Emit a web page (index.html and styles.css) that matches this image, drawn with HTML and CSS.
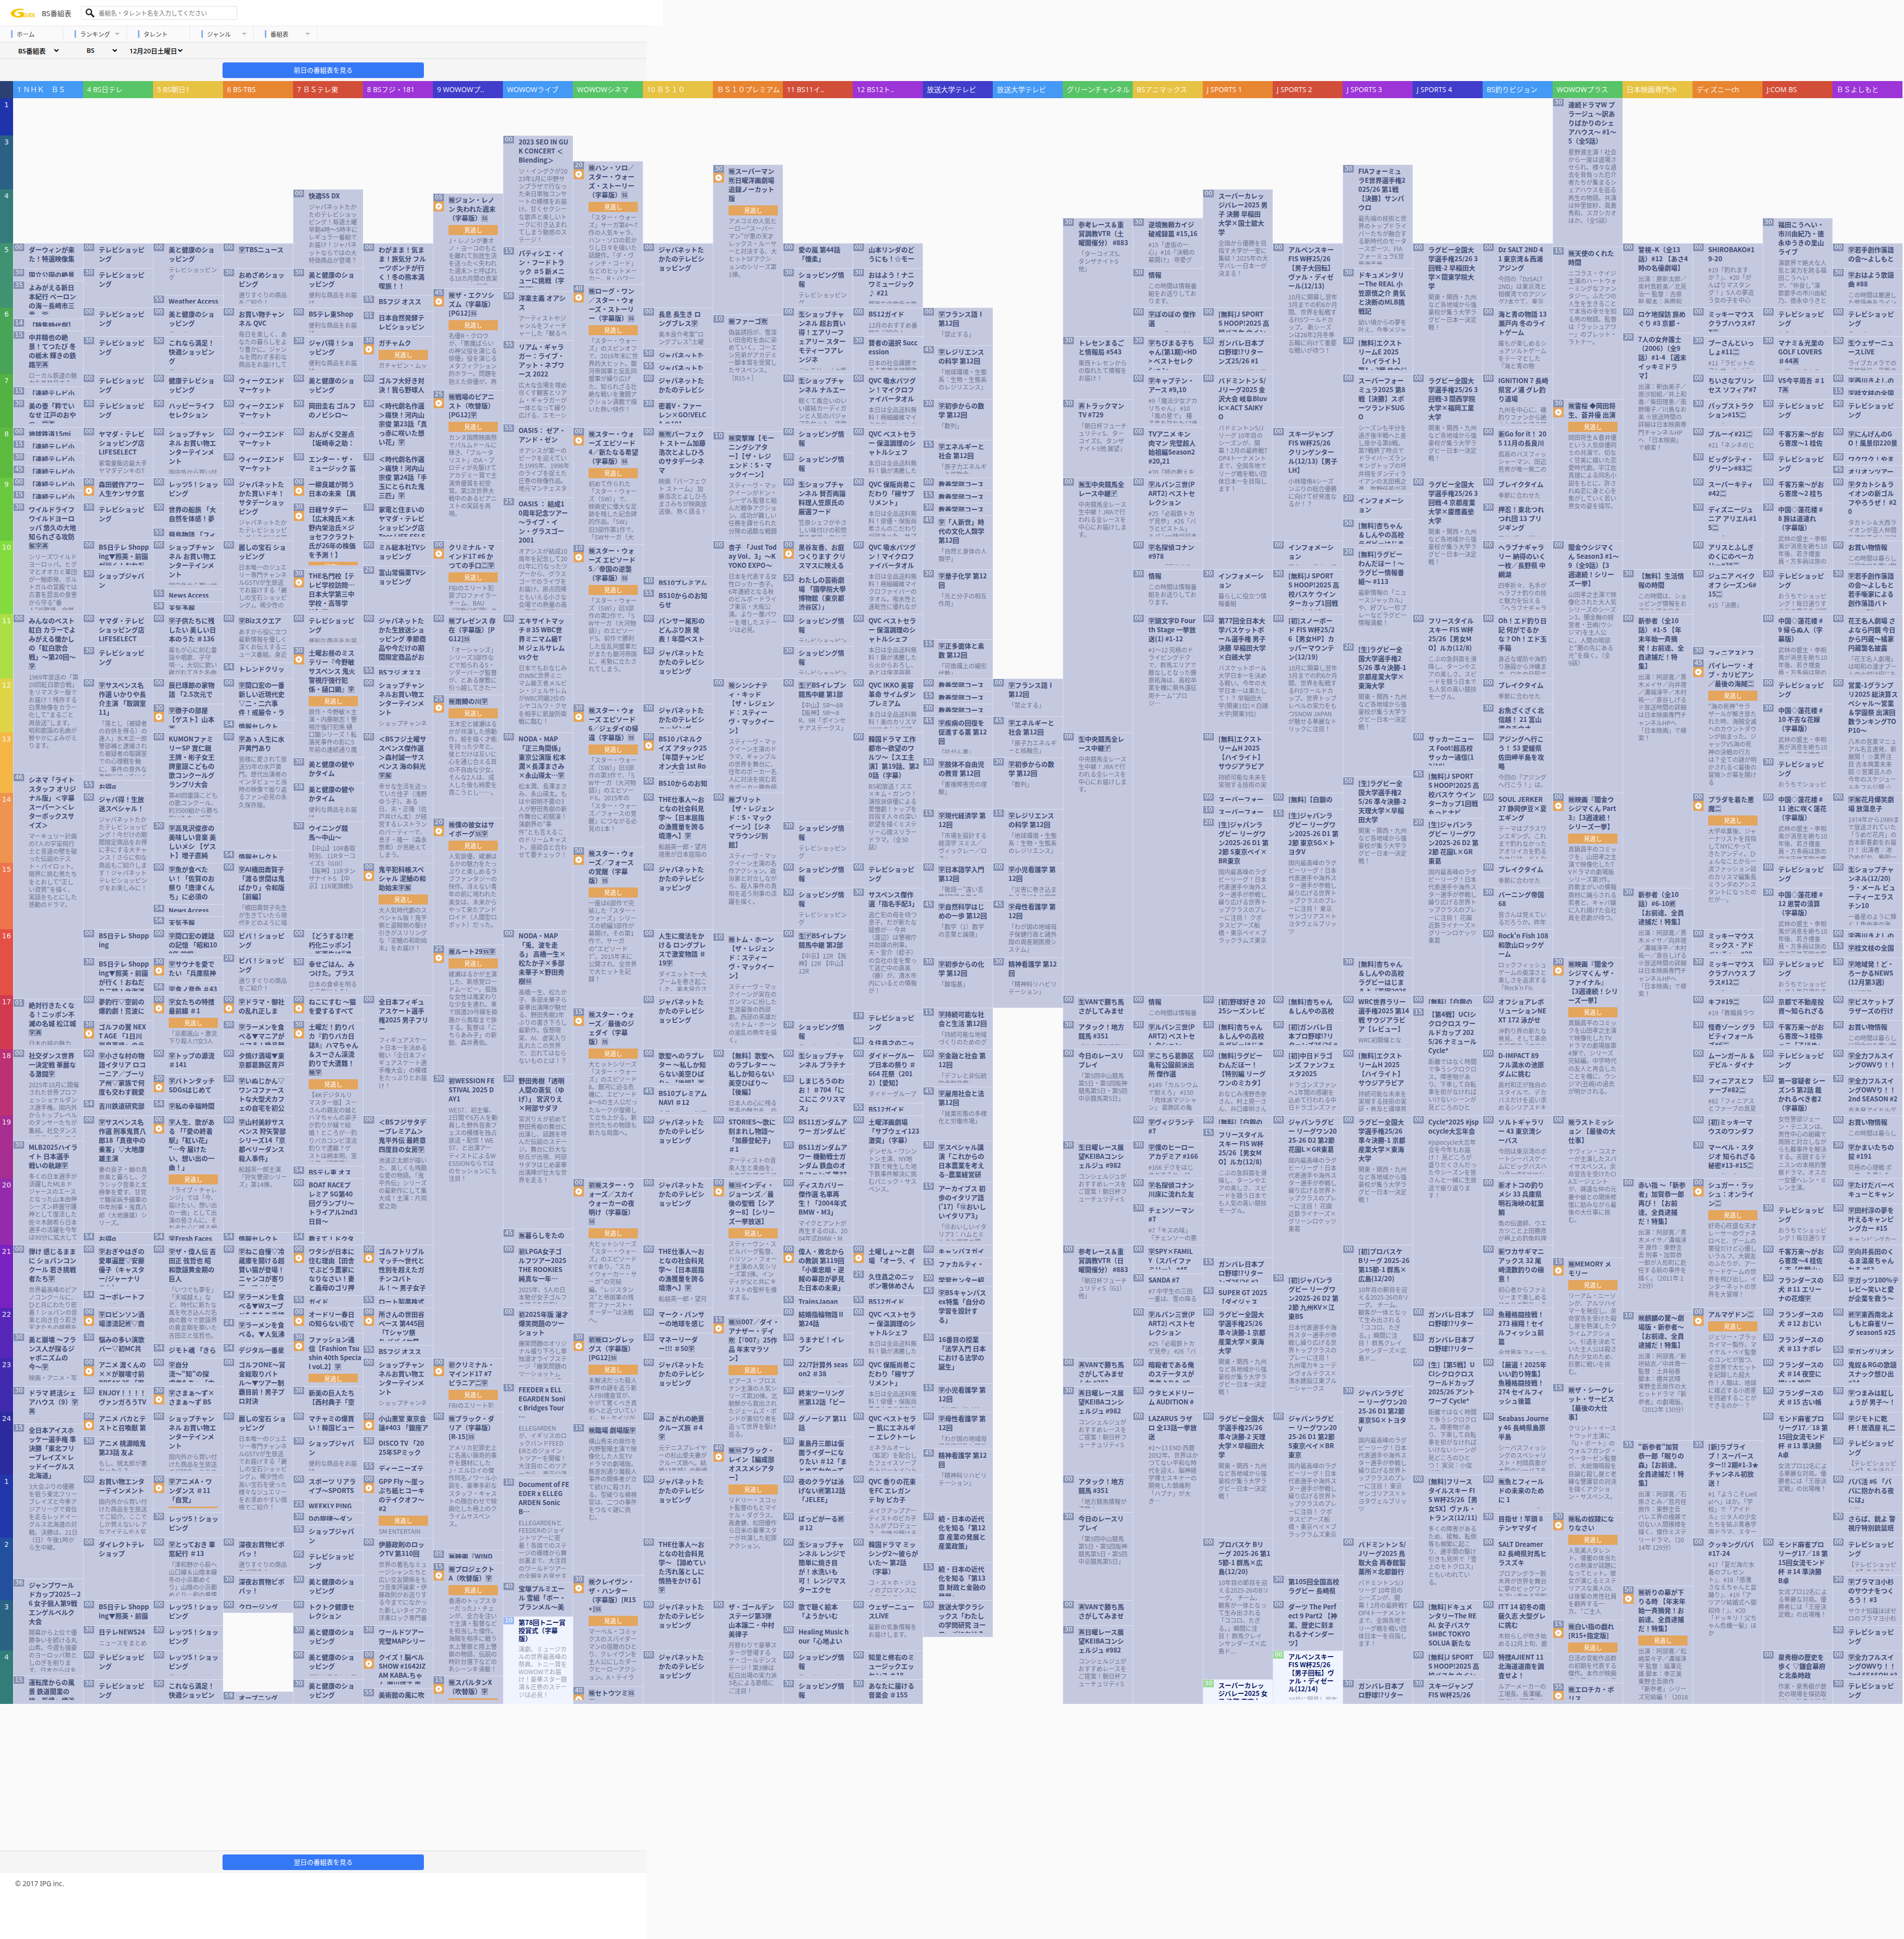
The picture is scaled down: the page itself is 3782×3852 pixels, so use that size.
FILE: index.html
```html
<!DOCTYPE html>
<html lang="ja">
<head>
<meta charset="utf-8">
<title>BS番組表</title>
<link rel="stylesheet" href="styles.css">
</head>
<body>
<header class="top">
  <svg class="logo" viewBox="0 0 52 22" width="52" height="22">
    <path d="M27 3C18 1 6 3 2 9c-3 6 5 11 14 11 5 0 9-1 11-2V9H15v3h5v4c-5 2-12 0-11-5 1-5 9-7 18-6z" fill="#f7c500"/>
    <text x="27" y="19" class="logo-text" textLength="23" lengthAdjust="spacingAndGlyphs">GUIDE</text>
  </svg>
  <span class="site">BS番組表</span>
  <label class="search">
    <svg viewBox="0 0 20 20" width="19" height="19"><circle cx="8" cy="8" r="5.6" fill="none" stroke="#222" stroke-width="2.6"/><path d="M12.3 12.3l5.4 5.4" stroke="#222" stroke-width="3.4" stroke-linecap="round"/></svg>
    <span>番組名・タレント名を入力してください</span>
  </label>
</header>
<nav class="nav">
  <a>ホーム</a><a class="more">ランキング</a><a>タレント</a><a class="more">ジャンル</a><a class="more">番組表</a>
</nav>
<div class="selects">
  <span class="select s1">BS番組表<svg viewBox="0 0 10 7" width="10" height="7"><path d="M1 1l4 4 4-4" fill="none" stroke="#000" stroke-width="2"/></svg></span>
  <span class="select s2">BS<svg viewBox="0 0 10 7" width="10" height="7"><path d="M1 1l4 4 4-4" fill="none" stroke="#000" stroke-width="2"/></svg></span>
  <span class="select s3">12月20日土曜日<svg viewBox="0 0 10 7" width="10" height="7"><path d="M1 1l4 4 4-4" fill="none" stroke="#000" stroke-width="2"/></svg></span>
</div>
<div class="pager"><a class="button">前日の番組表を見る</a></div>
<main class="guide" id="guide"></main>
<div class="pager bottom"><a class="button">翌日の番組表を見る</a></div>
<footer class="foot">© 2017 IPG inc.</footer>
<script src="guide.js"></script>
</body>
</html>
```
FILE: styles.css
```css
* { box-sizing: border-box; }
body {
  margin: 0;
  min-height: 3852px;
  background: #fafafa;
  font-family: "Noto Sans", "Noto Sans CJK JP", sans-serif;
  color: #444;
}
.top {
  display: flex;
  align-items: center;
  width: 1317px;
  height: 51px;
  padding-left: 20px;
  background: #fff;
}
.logo, .search svg, .select svg { flex: none; }
.logo-text { font: bold 11px "Liberation Sans", sans-serif; fill: #f7c500; }
.site { margin-left: 11px; width: 67px; font-size: 14px; white-space: nowrap; }
.search {
  display: flex;
  align-items: center;
  gap: 8px;
  width: 310px;
  height: 27px;
  margin-left: 11px;
  margin-top: -10px;
  padding-left: 7px;
  border: 1px solid #ddd;
  border-radius: 3px;
  font-size: 12px;
  color: #777;
  position: relative;
  top: 5px;
}
.nav {
  display: flex;
  width: 1284px;
  height: 33px;
  background: #fafafa;
  border-top: 1px solid #e6e6e6;
  border-bottom: 1px solid #ddd;
}
.nav a {
  display: flex;
  align-items: center;
  width: 126px;
  padding-left: 22px;
  border-right: 1px solid #e8e8e8;
  font-size: 12px;
}
.nav a::before { content: ""; width: 3px; height: 15px; margin-right: 8px; background: #7fb0f0; }
.nav .more::after {
  content: "";
  margin-left: auto;
  margin-right: 13px;
  border: 5px solid transparent;
  border-top-color: #bbb;
  border-bottom: 0;
}
.selects {
  display: flex;
  align-items: center;
  width: 1284px;
  height: 33px;
  padding-left: 36px;
  background: #f5f5f5;
  border-bottom: 1px solid #ddd;
  color: #000;
  font-size: 13px;
  font-weight: 500;
  white-space: nowrap;
}
.select { display: flex; align-items: center; justify-content: space-between; }
.s1 { width: 81px; }
.s2 { width: 61px; margin-left: 55px; }
.s3 { width: 106px; margin-left: 24px; }
.pager {
  display: flex;
  align-items: center;
  justify-content: center;
  width: 1284px;
  height: 44px;
  background: #f5f5f5;
}
.button {
  width: 400px;
  height: 31px;
  line-height: 31px;
  border-radius: 4px;
  background: #3478f6;
  color: #fff;
  font-size: 13px;
  text-align: center;
}
.guide { display: flex; width: 3779px; height: 3224px; }
.guide > div { width: 139px; }
.guide > .hours { width: 26px; }
.name {
  height: 34px;
  padding-left: 8px;
  line-height: 34px;
  font-size: 14px;
  color: rgba(255, 255, 255, .92);
  white-space: pre;
  overflow: hidden;
}
.hours .name { background: #2b4173; }
.hour {
  padding-top: 4px;
  text-align: center;
  font: 14px/19px "DejaVu Sans", sans-serif;
  color: rgba(255, 255, 255, .9);
}
.c0 { background: #4499f5; }
.c1 { background: #58c468; }
.c2 { background: #e7c243; }
.c3 { background: #e88531; }
.c4 { background: #d24e38; }
.c5 { background: #9c34d7; }
.c6 { background: #403dcb; }
.item {
  display: flex;
  align-items: flex-start;
  overflow: hidden;
  padding-bottom: 8px;
  border-top: 1px solid #dfe2f0;
  border-left: 1px solid #dfe2f0;
  background: #c5c9e0;
}
.side { width: 21px; height: 100%; overflow: hidden; flex: none; }
.min {
  height: 15px;
  background: #8591b3;
  color: #eef0f8;
  font: 12px/15px "DejaVu Sans", sans-serif;
  text-align: center;
}
.play { display: block; width: 21px; height: 20px; background: #e4a55d; }
.text {
  height: 100%;
  margin-left: 9px;
  padding-top: 3px;
  overflow: hidden;
  flex: 1;
  font-family: "Noto Sans CJK JP", sans-serif;
  white-space: pre;
}
.title { margin-bottom: 5px; font-size: 13px; line-height: 18px; font-weight: 700; color: #3f4d75; }
.catchup {
  width: 98px;
  height: 20px;
  margin-bottom: 3px;
  background: #e4a55d;
  color: #fff;
  font-size: 12px;
  line-height: 20px;
  text-align: center;
}
.desc { font-size: 12px; line-height: 15.1px; color: #6f7591; }
.later { background: #f0f4ff; }
.later .min { background: #9db9f5; color: #fff; }
.later.live .min { background: #97d997; }
.later .title { color: #0c1b66; line-height: 16px; }
.later .desc { color: #999eae; }
.bottom { margin-top: 291px; height: 45px; border-top: 1px solid #ddd; }
.foot { width: 1284px; height: 131px; padding: 12px 0 0 30px; background: #fff; font-size: 13.5px; color: #555; }
```
FILE: guide.js
```js
// Vertical position of every start time, in pixels from the top of the page.
const ticks = {
  "0130":195,"0300":269,"0320":320,"0330":327,"0400":376,"0405":384,"0430":433,
  "0500":483,"0515":490,"0530":533,"0535":558,"0540":565,"0545":573,"0550":579,"0555":586,
  "0600":611,"0601":618,"0610":625,"0614":633,"0615":657,"0620":661,"0630":668,"0635":676,"0645":686,"0650":693,"0655":718,
  "0700":743,"0715":768,"0725":775,"0730":793,"0755":842,
  "0800":849,"0810":857,"0815":874,"0830":899,"0845":924,
  "0900":949,"0915":974,"0920":981,"0925":988,"0930":999,"0945":1024,"0950":1031,"0955":1049,
  "1000":1074,"1010":1081,"1020":1088,"1029":1124,"1030":1131,"1035":1139,"1040":1145,"1055":1170,"1058":1195,
  "1100":1220,"1115":1270,"1120":1277,"1130":1284,"1145":1309,"1154":1316,"1155":1323,
  "1200":1348,"1215":1373,"1225":1380,"1230":1398,"1245":1423,"1254":1430,
  "1300":1455,"1330":1505,"1345":1529,"1346":1536,"1350":1543,"1355":1550,"1359":1555,
  "1400":1575,"1410":1600,"1415":1607,"1420":1625,"1430":1632,"1450":1682,"1454":1689,
  "1500":1714,"1530":1764,"1545":1788,"1554":1796,"1556":1820,
  "1600":1846,"1610":1853,"1615":1870,"1625":1877,"1629":1895,"1630":1902,"1656":1952,
  "1700":1977,"1701":1984,"1715":2002,"1719":2009,"1730":2027,"1748":2059,
  "1800":2084,"1830":2134,"1845":2159,"1854":2184,"1855":2191,
  "1900":2216,"1915":2241,"1930":2266,"1954":2316,
  "2000":2341,"2015":2348,"2030":2391,"2045":2441,"2054":2448,
  "2100":2473,"2115":2498,"2125":2523,"2130":2530,"2145":2555,"2154":2563,"2155":2573,
  "2200":2598,"2210":2605,"2215":2613,"2224":2619,"2230":2648,"2254":2669,"2255":2672,
  "2300":2698,"2315":2748,"2330":2754,
  "2400":2805,"2415":2828,"2430":2854,"2435":2861,"2440":2868,"2445":2878,"2455":2904,
  "2500":2930,"2510":2936,"2525":2979,"2530":3004,"2535":3029,
  "2600":3055,"2605":3079,"2615":3104,"2630":3129,"2636":3136,"2640":3143,"2650":3150,
  "2700":3179,"2701":3204,"2710":3211,"2715":3218,"2730":3229,"2745":3252,
  "2800":3279,"2815":3329,"2830":3336,"2835":3343,"2840":3350,"2855":3354,"2859":3360,"2900":3385
};

const hours = [
  ["0130","1","#1f34ab"],["0300","3","#2b6184"],["0400","4","#337c7a"],["0500","5","#409372"],["0600","6","#48a456"],
  ["0700","7","#53b241"],["0800","8","#5cba3e"],["0900","9","#6ac83c"],["1000","10","#82dc3e"],["1100","11","#acdf45"],
  ["1200","12","#ded446"],["1300","13","#f4b746"],["1400","14","#ef9350"],["1500","15","#ee744c"],["1600","16","#e55044"],
  ["1700","17","#d23a52"],["1800","18","#bd3073"],["1900","19","#a82d90"],["2000","20","#932bac"],["2100","21","#7a22c0"],
  ["2200","22","#5526b8"],["2300","23","#3f2aae"],["2400","24","#2b2a9e"],["2500","1","#2237ab"],["2600","2","#234f9f"],
  ["2700","3","#2a6284"],["2800","4","#327c79"]
];

// Texts that many programmes share, written as "@" and a letter in the lists below.
const shared = {
  t: "テレビショッピ|ング",
  s: "ショッピング情|報",
  j: "ジャパネットた|かたのテレビシ|ョッピング",
  b: "美と健康のショ|ッピング",
  l: "レッツ5！ショッ|ピング",
  w: "ウィークエンド|マーケット",
  c: "ショップチャン|ネル お買い物エ|ンターテインメ|ント",
  k: "教養学部コース",
  r: "【連続テレビ小",
  d: "テレビショッピン",
  n: "便利な商品をお届",
  q: "QVC ベストセラ|ー 保温調理のシ|ャトルシェフ",
  a: "本日は全品送料無|料！",
  v: "関東・関西・九州|など各地域から強|豪校が集う大学ラ|グビー日本一決定|戦！",
  g: "国内最高峰のラグ|ビーリーグ！日本|代表選手や海外ス|ター選手が参戦し|繰り広げる世界ト|ップクラスのプレ|ーに注目！ ",
  h: "武林の盟主・李相|夷が消息を絶ち10|年後、若き捜査",
  x: "THE仕事人～お|となの社会科見|学～【日本屈指|の漁獲量を誇る|境港へ】🈑~船越英一郎・望月|理恵が日本屈指の",
  f: "出演：阿部寛／黒|木メイサ／向井理|／溝端淳平／木村|祐一／泉谷しげる|※放送時間の詳細|は日本映画専門チ|ャンネルHPへ|「日本映画」で検|索！",
  z: "スティーヴ・マッ|クイーン",
  e: "[無料]J SPORT|S HOOP!2025 高|校バスケ ウイン",
  i: "[無料]杏ちゃん|＆しんやの高校",
  p: "ガンバレ日本プ|ロ野球!?リター",
  u: "日曜レース展|望KEIBAコンシ|ェルジュ #982~コンシェルジュが|おすすめレースを|ご提案！朝日杯フ|ューチュリティS",
  m: "今日のレースリ|プレイ~「第5回中山競馬|第5日・第5回阪神|競馬第5日・第5回|中京競馬第5日」",
  y: "おうちでショッピ",
  o: "10年目の節目を迎|える2025-26のBリ|ーグ。 チーム、|観客が一体となっ|て生み出される|「ココロ、たぎ|る。」瞬間に注|目！ 群馬クレイ|ンサンダーズ×広|島ド..."
};

// One programme per line: time + flags ~ title ~ description, "|" breaks a line.
// Flags: p = catch-up available, n = still to come, g = live, - = off air.
const channels = [
["1 ＮＨＫ　ＢＳ",`
0500~ダーウィンが来|た！特選映像集
0530~国立公園の絶景
0535~よみがえる新日|本紀行 ベーロン|の海－長崎市三|重－🈑
0614~【特集時代劇】
0615~中井精也の絶|景！てつたび 冬|の栃木 輝きの鉄|路🈑🈞~ローカル鉄道の魅|力を再発見する
0715~@r
0730~美の壺「粋でい|なせ 江戸のおや|つ」🈑🈞
0800~地球鉄道15mi
0815~@r
0830~@r
0845~@r
0900~@r
0915~@r
0930~ワイルドライフ|ワイルドヨーロ|ッパ 悠久の大地|知られざる攻防|🈖🈑🈞~シリーズワイルド|ヨーロッパ。ヒグ|マとオオカミ軍団|が一触即発、ボル|トガルの宮殿では|古書を昆虫の食害|から守る“番|人”が登場。自然
1100~みんなのベスト|紅白 カラーでよ|みがえる懐かし|の「紅白歌合|戦」～第20回～|🈑~1969年放送の「第|20回紅白歌合戦」|をリマスター版で|お届け！残存する|白黒映像をカラー|化して“まるごと|再放送”します。|昭和歌謡の名曲が|鮮やかによみがえ|ります。
1346~シネマ「ライト|スタッフ オリジ|ナル版」＜字幕|スーパー＞＜レ|ターボックスサ|イズ＞~マーキュリー計画|の7人の宇宙飛行|士と音速の壁を破|った伝説のテス|ト・パイロット。|限界に挑む男たち|をとおして“正し|い資質”を描く、|実話をもとにした|感動のドラマ。
1701~絶対行きたくな|る！ニッポン不|滅の名城 松江城|🈑🈞~日本の城の魅力
1800~社交ダンス世界|一決定戦 華麗な|る激闘🈑~2025年10月に開催|された世界プロフ|ェッショナルダン|ス選手権。国内外|からトップレベル|のダンサーたちが|集結。社交ダンス|とラテンダンスの
1930~MLB2025ハイラ|イト 日本選手|戦いの軌跡🈑~多くの日本選手が|活躍したMLB ド|ジャースのエース|となった山本由伸|シーズン終盤守護|神として復活した|佐々木朗希ら日本|選手の活躍を今年|は90分に拡大して
2100~弾け 感じるまま|に ショパンコン|クール 若き挑戦|者たち🈑~世界最高峰のピア|ノコンクールに、|ひと月にわたり密|着！ショパンの音|楽と向き合う若き|天才たちの挑戦を
2230~美と崩壊 ～フラ|ンス人が探るジ|ャポニズムの|今～🈑~映画・アニメ・写
2330~ドラマ 終活シェ|アハウス（9）🈑|🈞~高齢の“おひとり
2415~全日本アイスホ|ッケー選手権 準|決勝「東北フリ|ーブレイズ×レ|ッドイーグルス|北海道」~3大会ぶりの優勝|を狙う東北フリー|ブレイズと今季ア|ジアリーグで首位|を走るレッドイー|グルス北海道の対|戦。決勝は、21日|（日）午後1時か|ら生中継。
2636~ジャンプワール|ドカップ2025－2|6 女子個人第9戦|エンゲルベルク|大会~開幕から上位で優|勝争いを続ける丸|山希。今週も強豪|のヨーロッパ勢と|しのぎを削りま|す。日本からは丸
2815~運転席からの風|景 鉄道開業の|地・新橋～横浜`],
["4 BS日テレ",`
0500~@t
0530~@t
0600~@t
0630~@t
0700~@t
0730~@t
0800~ヤマダ・テレビ|ショッピング店|LIFESELECT~家電量販店最大手|ヤマダデンキのT
0900p~森田健作アワー|人生ケンサク窓|
0930~@t
1000~BS日テレ Shopp|ing▼照英・前園|が行く！おねだ
1030~ショップジャパ|ン
1100~ヤマダ・テレビ|ショッピング店|LIFESELECT
1130~@t
1200~🈑サスペンス名|作選 いかりや長|介主演 「取調室|11」~「落とし（被疑者|の自供を得る）の|達人」水木正一郎|警部補と逮捕され|た被疑者の取調室|での心理戦を軸|に、事件の意外な|真相に迫っていく
1355~お得α
1400~ジャパ得！生放|送スペシャル！~ジャパネットたか|たテレビショッピ|ング！今だけの期|間限定商品をお得|に手にする大チャ|ンス！さらに旬な|商品もご紹介しま|す！ジャパネット|テレビショッピン|グをお楽しみに！
1600~BS日テレ Shopp|ing
1630~BS日テレ Shopp|ing▼照英・前園|が行く！おねだ|り三昧！北海道
1700~夢釣行▽空前の|爆釣劇！荒波に
1730p~ゴルフの翼 NEX|T AGE 「1日川|岸良英塾」のラ|ウンド
1800~🈑小さな村の物|語イタリア ロコ|ーニア／プーリ|ア州▽家族で何|度も交わす親愛
1854~吉川鉄道研究部
1900~🈑サスペンス名|作選 刑事鬼貫八|郎18「真夜中の|乗客」▽大地康|雄主演~妻の良子・娘の真|奈美と暮らし、ク|ラシック音楽と太|極拳を愛す、甘党|で糖尿病予備軍の|中年刑事・鬼貫八|郎（大地康雄）シ|リーズ。
2054~お得α
2100~🈑おぎやはぎの|愛車遍歴▽安藤|優子（キャスタ|ー/ジャーナリ|スト）
2154~コーポレートフ|ァイル
2200p~🈑ロビンソン酒|場漂流記🈡▽商|
2230~悩みの多い演歌|バー▽初MC共
2300p~アニメ 渡くんの|××が崩壊寸前|BREAK 25 「家
2330~ENJOY！！！！|ヴァンガろうTV
2400p~アニメ バカとテ|ストと召喚獣 第|
2430~アニメ 桃源暗鬼|第23話 友よ~もし、桃太郎が悪|だったら？
2500~お買い物エンタ|ーテインメント~国内外から買い付|けた商品を生放送|でご紹介。ここで|しか買えないレア|なアイテムや人気
2600~ダイレクトテレ|ショップ
2700~BS日テレ Shopp|ing▼照英・前園
2730~日テレNEWS24~ニュースをまとめ
2800~@t
2830~@t`],
["5 BS朝日1",`
0500~@b~テレビショッピン|グ
0555~Weather Access
0600~@b~@d
0630~これなら満足！|快適ショッピン|グ~@d
0700~健康テレビショ|ッピング
0730~ハッピーライフ|セレクション~@d
0800~@c~国内外から買い付
0900~@l
0930~世界の船旅 「大|自然を体感！夢
0955~飛鳥物語 「フィ
1000~@c~国内外から買い付
1055~News Access
1058~天気予報
1100~🈑子供たちに残|したい 美しい日|本のうた ＃136~誰もが心に刻む童|謡や唱歌、子守|唄…。大切に歌い|継がれてきた名曲
1200~辰巳琢郎の家物|語 「2.5次元で
1230p~🈑徹子の部屋|【ゲスト】山本|🈞
1300~KUMONファミ|リーSP 寛仁親|王牌・彬子女王|牌童謡こどもの|歌コンクールグ|ランプリ大会~第40回童謡こども|の歌コンクール、|約3500組から勝ち|抜いたキッズ部
1430~🈑高見沢俊彦の|美味しい音楽 美|しいメシ 【ゲス|ト】増子直純
1500~🈑魚が食べた|い！「佐賀のお|祭り「唐津くん|ち」に必須の
1554~News Access
1556~天気予報
1600~🈑関口宏の雑誌|の記憶 「昭和10|0年 前編」
1630p~🈑サウナを愛で|たい 「兵庫県神|
1656~🈑食ノ音色 ＃43
1700p~🈑女たちの特捜|最前線 ＃1~「京都嵐山・激流|下り殺人!?女3人
1800~🈑トップの源流|＃141
1830p~🈑バトンタッチ|SDGsはじめて|
1854~🈑私の幸福時間
1900p~🈑人生、歌があ|る 「「愛の終着|駅」「紅い花」|“…今 届けた|い、想い出の一|曲！」~「ライブ・チャレ|ンジ」では「今、|届けたい、想い出|の一曲」として出|演の皆さんに、そ|れぞれ心に残る想
2054~🈑Fresh Faces
2100~🈑ザ・偉人伝 吉|田正 弦哲也 昭|和歌謡黄金期の|巨人~「いつでも夢を」|「天城越え」な|ど、時代に新たな|風を吹き込んだ名|曲の数々で歌謡界|の黄金期を築いた|吉田正と弦哲也。|吉田正の弟子の橋
2254~ジモト魂 「きら
2300~🈑自分|流～“知”の探|求者たち～「中
2330p~🈑さまぁ～ず×|さまぁ～ず BS|
2400~@c~国内外から買い付|けた商品を生放送|でご紹介。ここで
2500p~🈑アニメA・ワ|ンダンス ＃11|「自覚」
2530~@l
2600~🈑とっておき 車|窓紀行 ＃13~「津和野から萩へ|山口線＆山陰本線|冬の小京都めぐ|り」山陰の小京都|めぐり…和の風情
2700~@l
2730~@l
2800~@l~@d
2830~これなら満足！|快適ショッピン`],
["6 BS-TBS",`
0500~🈑TBSニュース
0530~おめざめショッ|ピング~選りすぐりの商品|をご紹介！
0600~お買い物チャン|ネル QVC~毎日を楽しく、あ|なたの暮らしをよ|り豊かに。ジャン|ルを問わず多彩な|商品をお届けして
0700~@w
0730~@w~選りすぐりの商品
0800~@w
0830~@w
0900~ジャパネットた|かた買いドキ！|サタデーショッ|ピング~ジャパネットたか|たテレビショッピ|ング！今だけの期
1000~麗しの宝石 ショ|ッピング~日本唯一のジュエ|リー専門チャンネ|ルGSTVが生放送|でお届けする「麗|しの宝石ショッピ|ング」。稀少性の|高い宝石を使った
1100~🈑Bizスクエア~あすから役に立つ|最新情報を優しく|深くお伝えするニ|ュース番組。身近
1154~トレンドクリッ
1200~🈑関口宏の一番|新しい近現代史|▽二・二六事|件！戒厳令・ラ
1254~情報セレクト
1300~🈑あゝ人生に水|戸黄門あり~皆様に愛されて放|送55年の水戸黄|門。歴代出演者の|インタビューと当|時の映像で振り返|るファン必見の永|久保存版。
1454~情報セレクト
1500~🈑AI橋田壽賀子|「渡る世間は鬼|ばかり」令和版|【前編】~「橋田壽賀子先生|が生きていたら現|代をどのように描
1600~ビバ！ショッピ|ング
1629~ビバ！ショッピ|ング~選りすぐりの商品|をご紹介！
1700p~🈑ドラマ・御社|の乱れ正しま|
1730~🈑ラーメンを食|べる▼マニアが|ハマる！絶品麺
1800~夕焼け酒場▼東|京都葛飾区青戸
1830~🈑いぬじかん▽|ワンコファース|トな大型犬カフ|ェの自宅を初公
1900~🈑山村美紗サス|ペンス 狩矢警部|シリーズ14「京|都ベリーダンス|殺人事件」~船越英一郎主演|「狩矢警部シリー|ズ」第14弾。
2054~情報セレクト
2100~🈑ねこ自慢▽冷|蔵庫を開ける超|賢い猫が登場！|ニャンコが寄り|添ってくれる
2154~🈑ラーメンを食|べる▼Wスープ|×たちたち手揉
2224~🈑ラーメンを食|べる。▼人気沸
2254~デジタル一番星
2300~ゴルフONE～賞|金総取りバト|ル～▼ツアー制|覇目前！男子プ|ロ対決
2400~麗しの宝石 ショ|ッピング~日本唯一のジュエ|リー専門チャンネ|ルGSTVが生放送|でお届けする「麗|しの宝石ショッピ|ング」。稀少性の|高い宝石を使った|様々なジュエリー|をお求めやすい価|格でご紹介！
2600~深夜お買物ビボ|バッ！~選りすぐりの商品|をご紹介！
2630~深夜お買物ビボ|バッ！
2700~クロージング
2701-
2859~オープニング`],
["7 ＢＳテレ東",`
0400~快適SS DX~ジャパネットたか|たのテレビショッ|ピング！毎週土曜|早朝4時～5時半に|レギュラー番組で|お届け！ジャパネ|ットならではの大|特価商品が登場？
0530~@b~@n|け
0600~BSテレ東Shop~@n|け
0630~ジャパ得！ショ|ッピング~@n|け
0700~@b
0730~岡田圭右 ゴルフ|のノビシロ～~アマゴルファーの
0800~おんがく交差点|【坂崎幸之助：
0830~エンター・ザ・|ミュージック 笛
0900p~一柳良雄が問う|日本の未来 【異|
0930p~日経サタデー|【広木隆氏×木|野内栄治氏×ジ|ョセフクラフト|氏が26年の株価|を予測！】
1030p~THE名門校【テ|レビ学校訪問…|日本大学第三中|学校・高等学|校】🈑
1100~@t~@n
1130p~土曜お昼のミス|テリー『今野敏|サスペンス 鬼火|警視庁強行犯|係・樋口顕』🈑~原作・今野敏×主|演・内藤剛志！警|視庁強行犯係 樋|口顕シリーズ！転|落死事件の影に5|年前の連続通り魔
1330~美と健康の健や|かタイム
1359~美と健康の健や|かタイム~@n|け
1430~ウイニング競|馬～中山～~【中山】10R香取|特別、11Rターコ|イズS（GⅢ）|【阪神】11Rタン|ザナイトS 【中|京】11R尾頭橋S
1600~【どうする!?老|朽化ニッポン】|～街再生は“進
1630~幸せごはん、み|つけた。プラス~日本の食卓を明る|く元気に！そし
1700p~ねこにすむ ～猫|を愛するすべて|
1730p~土曜だ！釣りバ|カ『釣りバカ日|誌8』ハマちゃん|＆スーさん渓流|釣りで大遭難！|🈙🈑~【4Kデジタルリ|マスター版】スー|さんの親友の娘と|ハマちゃんの弟子|が釣りが縁で結|婚！ところが…釣|りバカコンビ渓流|釣りで遭難？ゲ|ストは柄本明、室|井滋、通算第8
1954~BSテレ東 オス
2000~BOAT RACEプ|レミア SG第40|回グランプリ～|トライアル2nd3|日目～
2054~教えて！ドクタ
2100p~ワタシが日本に|住む理由【田舎|でぶどう農家に|なりなさい！妻|と義母のゴリ押|し
2155~ガイド
2200p~オードリー春日|の知らない街で|
2230p~ファッション通|信【Fashion Tsu|shin 40th Specia|l vol.2】🈑
2330~新美の巨人たち|【西村典子「空
2400~マチャミの爆買|い！韓国ビュー
2430~ショップジャパ|ン~@n|け
2500~スポーツ リアラ|イブ～SPORTS
2525~WEEKLY PING
2530~Dの旋律～ダン
2535~ショップジャパ|ン
2605~@t
2630~@b
2700~トクトク健康セ|レクション
2730~@b
2800~@b~@n
2830~@b`],
["8 BSフジ・181",`
0500~わがまま！気ま|ま！旅気分 フル|ーツポンチが行|く！冬の熊本満|喫旅！！
0555~BSフジ オスス
0601~日本自然発酵テ|レビショッピン
0630p~ガチャムク~ガチャピン・ムッ
0700~ゴルフ大好き対|決！我ら野球人
0730~＜時代劇名作選|＞痛快！河内山|宗俊 第23話「真|っ赤に咲いた想|い花」🈑
0830~＜時代劇名作選|＞痛快！河内山|宗俊 第24話「手|玉にとられた鬼|三匹」🈑
0930~家電と住まいの|ヤマダ・テレビ|ショッピング店|Tecc LIFE SELE
1000~ミル総本社TVシ|ョッピング
1029~富山常備薬TVシ|ョッピング
1100~ジャパネットた|かた生放送ショ|ッピング 季節商|品や今だけの期|間限定商品がお
1155~BSフジ オスス
1200~ショップチャン|ネルお買い物エ|ンターテインメ|ント~ショップチャンネ|ルがお届けする
1300~＜BSフジ土曜サ|スペンス傑作選|＞森村誠一サス|ペンス 海の斜光|🈑🈖~幸せな生活を送っ|ていた佳子（浅野|ゆう子）。ある|日、夫・正隆（佐|戸井けん太）が経|営するレストラン|のパーティーで、|息子・隆一（森永|悠希）が息絶えて|しまう。
1500p~鬼平犯科帳スペ|シャル 泥鰌の和|助始末🈑🈖~大人気時代劇のス|ペシャル版！鬼平|側と盗賊側の駆け|引きがスリリング|な「泥鰌の和助始|末」をお届け！
1700~全日本フィギュ|アスケート選手|権2025 男子フリ|ー~フィギュアスケー|ト日本一を決める|戦い「全日本フィ|ギュアスケート選|手権大会」の模様|をたっぷりとお届|け！
1900~＜BSフジサタデ|ープレミアム＞|鬼平外伝 最終章|四度目の女房🈑~池波正太郎が描い|た、美しくも残酷|な愛の物語。「鬼|平外伝」シリーズ|の最新作にして集|大成！主演：片岡|愛之助
2100p~ゴルフトリブル|マッチ～世代と|性別を超えたガ|チンコバト|ル！～ 男子女子|
2155~ロート製薬株式
2200p~所さんの世田谷|ベース 第445回|「Tシャツ祭|り パパイヤ祭
2255~BSフジ オスス
2300~ショップチャン|ネルお買い物エ|ンターテインメ|ント~ショップチャンネ|ルがお届けする
2400p~小山薫堂 東京会|議#403 「銀座ア|
2430~DISCO TV 「20|25年SPミック
2455~ディーニーズテ
2500p~GPP Fly ～崖っ|ぷち紙ヒコーキ|のテイクオフ～|#2~SM ENTERTAIN
2600~伊藤政則のロッ|クTV 第310回~世界の著名なミュ|ージシャンたちと|広い交友関係をも|つ音楽評論家・伊|藤政則がお送りす|る今までになかっ|た新しいタイプの|洋楽ロック専門番|組です。
2730~ワールドツアー|完璧MAPシリー
2800p~クイズ！脳ベル|SHOW #1642IZ|AM KABA.ちゃ|ん 瀬川瑛子 東
2855~美術館の風に吹`],
["9 WOWOWプ..",`
0405p~🈙ジョン・レノ|ン 失われた週末|（字幕版）🅍~J・レノンが妻オ|ノ・ヨーコのもと|を離れて別居生活|を送った＜失われ|た週末＞と呼ばれ|る18カ月間の真実|を、2人と親密
0545p~🈙ザ・エクソシ|ズム（字幕版）|[PG12]🅍~名優R・クロウ|が、「悪魔ばらい|の神父役を演じる|俳優」役を演じる|メタフィクション|的ホラー。問題を|抱えた俳優が、再
0725p~🈙戦場のピアニ|スト（吹替版）|[PG12]🈑~カンヌ国際映画祭|でパルムドールに|輝き、「ブルータ|リスト」のA・ブ|ロディが先駆けて|アカデミー賞で主|演男優賞を初受|賞。第2次世界大|戦中のあるピアニ|ストの実話を再|現。
1000p~クリミナル・マ|インド17 #6 か|つての手口🈔🈑~FBIのエリート犯|罪プロファイラー|チーム、BAU|（行動分析課）の
1100~🈙プレゼンス 存|在（字幕版）[P|G12]🅍~「オーシャンズ」|シリーズ3部作な|どで知られるS・|ソダーバーグ監督|が、とある屋敷に|引っ越してきた一
1225p~🈙雨鱒の川🈑~玉木宏と綾瀬はる|かが共演した感動|作。絵を描く才能|を持った少年と、|彼とだけは互いに|心を通じ合える耳|の不自由な少女。|そんな2人は、成|人した後も純愛を|貫こうとし……。
1420p~🈙僕の彼女はサ|イボーグ🅍🈑~人気俳優、綾瀬は|るかの魅力をたっ|ぷりと楽しめるラ|ブファンタジーの|快作。冴えない青|年の前に現われた|美女は、未来から|やって来たアンド|ロイド（人間型ロ|ボット）だった。
1625p~🈙ルート29🅍🈑~綾瀬はるかが主演|した、新感覚ロー|ドムービー。孤独|な女性は風変わり|な少女を連れ、車|で国道29号線を姫|路から鳥取まで旅|する。監督は「こ|ちらあみ子」の新|鋭、森井勇佑。
1830~🈠WESSION FE|STIVAL 2025 D|AY1~WEST．初主催、|2日間で6万人を動|員した野外音楽フ|ェスの模様を独占|放送・配信！WE|ST．と出演アー|ティストによるW|ESSIONならでは|のセッションにも|注目！
2300p~🈠クリミナル・|マインド17 #7|ピラニア🈔🈑~FBIのエリート犯
2400~🈙ブラック・ダ|リア（字幕版）|[R-15]🅍~アメリカ犯罪史上|に名高い猟奇的事|件を題材にした|J・エルロイの傑|作同名ノワール小|説を、豪華多彩な|スタッフ・キャス|トの顔合わせで映|画化した極上のク|ライムサスペン|ス。
2605~🈚映画『WIND
2615p~🈙プロジェクト|A（吹替版）🈑~香港のトップスタ|ーだったJ・チェ|ンが、全力を注い|で主演・監督など|を担当した傑作。|海賊を相手に戦う|水上警察と陸上警|察の物語、伝説の|時計台落下などの|名シーンを満載！
2815p~🈙スパルタンX|（吹替版）🈑`],
["WOWOWライブ",`
0300~2023 SEO IN GU|K CONCERT ＜|Blending＞~ソ・イングクが20|23年1月に中野サ|ンプラザで行なっ|た来日単独コンサ|ートの模様をお届|け。甘くセクシー|な歌声と楽しいト|ークに引き込まれ|てしまう魅惑のス|テージ！
0515~パティシエ・イ|ン・フードトラ|ック ＃5 新メニ|ューに挑戦（字|幕版）
0550~洋楽主義 オアシ|ス~アーティストやジ|ャンルをフィーチ|ャーした「観るベ
0635~リアム・ギャラ|ガー：ライブ・|アット・ネブワ|ース 2022~広大な会場を埋め|尽くす観客とリア|ム・ギャラガーが|一体となって繰り|広げる、エモーシ|ョナルで感動的な
0755~OASIS： ゼア・|アンド・ゼン~オアシスが第一の|ピークを迎えてい|た1995年、1996年|のライブを捉えた|圧巻の映像作品。|地元マンチェスタ|ーでの凱旋ライブ
0925~OASIS ： 結成1|0周年記念ツアー|～ライブ・イ|ン・グラスゴー|2001~オアシスが結成10|周年を記念して20|01年に行なったツ|アーから、グラス|ゴーでのライヴを|お届け。原点回帰|ともいえる小さな|会場での熱量の高|い演奏は必見！
1100~エキサイトマッ|チ＃35 WBC世|界ミニマム級T|M ジェルサレム|vsクセ~日本でもおなじみ|のWBC世界ミニ|マム級王者メルビ|ン・ジェルサレム|がWBC同級2位の|シヤコルワ・クセ|を相手に凱旋防衛|戦に臨む！
1300~NODA・MAP|「正三角関係」|東京公演版 松本|潤×長澤まさみ|×永山瑛太…🈑~松本潤、長澤まさ|み、永山瑛太。も|はや説明不要の3|人が野田秀樹の新|作舞台に初競演！|演劇界の“事|件”とも言えるこ|のドリームキャス|ト、座談会と合わ|せて要チェック！
1600~NODA・MAP|「兎、波を走|る」 高橋一生×|松たか子×多部|未華子×野田秀|樹🅍~高橋一生、松たか|子、多部未華子ら|豪華出演陣が魅せ|る、野田秀樹2年|ぶりの書き下ろし|最新作。仮想現|実、AI、虚実入り|乱れたこの世界|で、忘れてはなら|ないものとは！？
1830~野田秀樹「透明|人間の蒸気（ゆ|げ）」 宮沢りえ|×阿部サダヲ~宮沢りえが初めて|野田秀樹の舞台に|出演し、話題を呼|んだ伝説のステー|ジ。舞台に巨大な|砂丘が出現、阿部|サダヲはじめ豪華|出演陣が壮大な世|界を走る！
2045~🈚暮らしをたの
2100~🈠LPGA女子ゴ|ルフツアー2025|THE ROOKIES|純真な一年…~2025年、5人の日|本勢が女子ゴルフ|の頂点を目指し
2200~🈠2025年版 漫才|爆笑問題のツー|ショット~爆笑問題のオリジ|ナル撮り下ろし単|独漫才ライブステ|ージ「爆笑問題の|ツーショット」。|2025年の出来事
2315~FEEDER x ELL|EGARDEN Soni|c Bridges Tour|…~ELLEGARDEN|が、イギリスのロ|ックバンドFEED|ERとのジョイン|トツアーを開催！|大注目のこのツア|ーから、東京公演
2510~Document of FE|EDER x ELLEG|ARDEN Sonic|B…~ELLEGARDENと|FEEDERのジョイ|ントツアーに密|着！各国でのステ|ージの模様から舞|台裏まで、大注目|のワールドツアー|の全貌をお見せす
2640~宝塚プルミエー|ル 雪組「ボー・|ブランメル～美
2710n~第78回トニー賞|授賞式（字幕|版）~演劇、ミュージカ|ルの世界最高峰の|祭典、トニー賞を|WOWOWでお届|け！豪華スター競|演＆圧巻のステー|ジは必見！`],
["WOWOWシネマ",`
0320p~🈙ハン・ソロ／|スター・ウォー|ズ・ストーリー|（字幕版）🅍~「スター・ウォー|ズ」サーガ第4～7|作の人気キャラ、|ハン・ソロの若か|りし日々を描いた|話題作。「ダ・ヴ|ィンチ・コード」|などのヒットメー|カー、R・ハワー
0540p~🈙ローグ・ワン|／スター・ウォ|ーズ・ストーリ|ー（字幕版）🅍~「スター・ウォー|ズ」のスピンオフ|で、2016年末に世|界的大ヒット。銀|河帝国軍と反乱同|盟軍が繰り広げ|た、知られざる壮|絶な戦いを激闘ア|クション満載で描|いた熱い快作！
0800p~🈙スター・ウォ|ーズ エピソード|4／新たなる希望|（字幕版）🅍~初めて作られた|「スター・ウォー|ズ（SW）」で、|映画史に偉大な足|跡を残した記念碑|的作品。「SW」|旧3部作第1作で、|「SWサーガ（大
1010p~🈙スター・ウォ|ーズ エピソード|5／帝国の逆襲|（字幕版）🅍~「スター・ウォー|ズ（SW）」旧3部|作の第2作で、「S|Wサーガ（大河物|語）」のエピソー|ド5。前作で勝利|した反乱同盟軍だ|がまたも銀河帝国|に、劣勢に立たさ|れてしまう。
1230p~🈙スター・ウォ|ーズ エピソード|6／ジェダイの帰|還（字幕版）🅍~「スター・ウォー|ズ（SW）」旧3部|作の第3作で、「S|Wサーガ（大河物|語）」のエピソー|ド6。2015年の|「スター・ウォー|ズ／フォースの覚|醒」につながる必|見の1本！
1450p~🈙スター・ウォ|ーズ／フォース|の覚醒（字幕|版）🅍~一度は6部作で完|結した「スター・|ウォーズ」シリー|ズの続編3部作が|幕開け。その第1|作で、サーガ|の“エピソード|7”。2015年末に|公開され、全世界|で大ヒットを記|録！
1715p~🈙スター・ウォ|ーズ／最後のジ|ェダイ（字幕|版）🅍~大ヒットシリーズ|「スター・ウォー|ズ」のエピソード|8。銀河に迫る危|機に、エピソード|4～6の主人公だっ|たルークが復帰し|て立ち上がる。新|世代たちの物語も|新たな局面へ。
2000p~🈠🈙スター・ウ|ォーズ／スカイ|ウォーカーの夜|明け（字幕版）|🅍~大ヒットシリーズ|「スター・ウォー|ズ」のエピソード|9であり、“スカ|イウォーカー・サ|ーガ”の完結|編。“レジスタン|ス”と帝国軍の残|党“ファースト・|オーダー”は決戦|へ。
2230p~🈠🈙ロングレッ|グス（字幕版）|[PG12]🅍~未解決だった殺人|事件の謎を追う新|人FBI捜査官が、|やがて驚くべき真|相へと近づいてい|く。N・ケイジが
2415~🈙臨場 劇場版🈑~横山秀夫の原作を|内野聖陽主演で映|像化した人気TV|ドラマの劇場版。|無差別通り魔殺人|事件の関係者が立|て続けに殺され|る。型破りな検視|官は、二つの事件|をつなぐ謎に挑|む。
2630p~🈙クレイヴン・|ザ・ハンター|（字幕版）[R15|+]🅍~マーベル・コミッ|クスのスパイダー|マンの宿敵のひと|り、クレイヴンを|主人公にしたダー|クヒーローアクシ|ョン。A・テイラ|ー＝ジョンソン
2840p~🈙セトウツミ🅍|🈑`],
["10 ＢＳ１０",`
0500~@j
0600~長息 長生き ロ|ングブレス🈑~美木良介考案”ロ|ングブレス”土曜
0650~ジャパネットた
0655~ジャパネットた
0700~ジャパネットた|かたのテレビシ
0730~密着V・ファー|レン×GO!VELC|A ＃101
0800~🈙🈥パーフェク|ト ストーム加藤|浩次とよしひろ|のサタデーシネ|マ~映画『パーフェク|ト ストーム』 加|藤浩次とよしひろ|まさみちが映画放|送後、熱く語る！
1040~BS10プレミアム
1055~BS10からのお知|らせ
1100~パンサー尾形の|どんぶり旅 発|表！年間ベスト
1130~@j
1230~@j
1300p~BS10 パネルク|イズ アタック25|【年間チャンピ|オン大会 1st Ro|und】🈑
1350~BS10からのお知
1400~@x|漁獲量を誇る境港
1500~@j
1600~人生に魔法をか|ける ロングブレ|スで激変物語 ＃|19🈑~ダイエットで一大|ブームを巻き起こ|した、美木良介さ
1700~@j
1800~歌聖へのラブレ|ター ～私しか知|らない美空ひば|り～【後編】🈞
1845~BS10プレミアム|NAVI ＃12~今月あついい映画
1900~@j
2000~@j
2100~@x
2200~マーク・パンサ|ーの地球を感じ
2230~マネーリーダ|ー!!! ＃50🈑
2300~@j
2400~あこがれの絶景|クルーズ旅 ＃4|🈑~元テニスプレイヤ|ーの杉山愛夫妻が|クルーズ旅へ。結|婚13年越しの新婚
2500~@j
2600~THE仕事人～お|となの社会科見|学～ 【諦めてい|た汚れ落としに|情熱をかける】|🈑
2700~@j
2800~@j`],
["ＢＳ１０プレミアム",`
0330p~🈙スーパーマン|🈥日曜洋画劇場|追録ノーカット|版~アメコミの人気ヒ|ーロー“スーパー|マン”が悪の天才|レックス・ルーサ|ーと対決する、大|ヒットSFアクシ|ョンのシリーズ第|1弾。
0610~🈙ファーゴ🈥~偽装誘拐が、雪深|い田舎町を血に染|めていく。コーエ|ン兄弟がアカデミ|ー脚本賞を受賞し|たサスペンス。|［R15＋］
0810~🈙突撃隊【モー|ニングシアタ|ー】【ザ・レジ|ェンド：S・マ|ックイーン】~スティーヴ・マッ|クイーンがドン・|シーゲル監督と組|んだ戦争アクショ|ン。成功が難しい|任務を課せられた|分隊の過酷な戦闘|を描く。
1000~杏子 「Just Tod|ay Vol．3」～K|YOKO EXPO～~日本を代表する女|性ロッカー杏子。|6年連続となる秋|のビルボードライ|ブ東京・大阪公|演。より一層パワ|ーを増したステー|ジは必見。
1200~🈙シンシナテ|ィ・キッド|【ザ・レジェン|ド：スティー|ヴ・マックイー|ン】~@z主演のド|ラマ。ギャンブル|の世界を舞台に、|往年のポーカー名|人に対決を挑む若|きポーカー勝負師
1400~🈙ブリット|【ザ・レジェン|ド：S・マック|イーン】【シネ|マラウンジ別|館】~@z主演の名|作アクション。政|治家と対立しなが|ら、殺人事件の真|相を追う刑事の活|躍を描く。
1610~🈙トム・ホーン|【ザ・レジェン|ド：スティー|ヴ・マックイー|ン】~@zが実在の|ガンマンに扮した|生涯最後の西部|劇。西部の英雄だ|ったトム・ホーン|の波乱の晩年を描|く。
1800~【無料】歌聖へ|のラブレター ～|私しか知らない|美空ひばり～|【後編】~日本人の心に残る|歌手の魅力を、ゆ
1900~STORIES～歌に|刻まれし物語～|「加藤登紀子」|＃1~アーティストの音|楽人生と楽曲を、|人生折れ線グラフ
2000p~🈙🅍インディ・|ジョーンズ／最|後の聖戦【シア|ター8】【シリー|ズ一挙放送】~スティーヴン・ス|ピルバーグ監督、|ハリソン・フォー|ド主演の人気シリ|ーズ第3弾。イン|ディが父と共にキ|リストの聖杯を捜|索する。
2215p~🈙🅍007／ダイ・|アナザー・デイ|🈥【『007』25作|品 年末マラソ|ン】~ピアース・ブロス|ナン主演の人気シ|リーズ第20弾。北|朝鮮から救出され|たジェームズ・ボ|ンドが裏切り者を|追って世界を駆け|巡る。
2440p~🈙🅍ブラック・|レイン【編成部|オススメシアタ|ー】~リドリー・スコッ|ト監督のもとマイ|ケル・ダグラス、|高倉健、松田優作|ら日米の豪華スタ|ーが共演した犯罪|アクション。
2700~ザ・ゴールデン|ステージ第3弾|山本譲二・中村|美律子~月替わりで豪華ス|ターが登場する|ザ・ゴールデンス|テージ！第3弾は|紅白出場の実力派|3名による歌唱に|ご注目！`],
["11 BS11イ..",`
0500~愛の嵐 第44話|「懐柔」
0530~@s~テレビショッピン|グ
0600~🈢ショップチャ|ンネル 超お買い|得！エアリーフ|ェアリー スター|モティーフアレ|ンジネ~ジュエリー／上質
0700~🈢ショップチャ|ンネル ナルエー~軽くて風合いのい|い接結カーディガ|ンと人気のパジャ|マをセット。北欧
0800~@s
0830~@s
0900~🈢ショップチャ|ンネル 賛否両論|料理人笠原氏の|厳選フード~笠原シェフがやさ|しい味付けの和惣|菜を厳選。白いご
1000p~黒谷友香、お庭|つくります クリ|スマスに映える
1035~わたしの芸術劇|場 「國學院大學|博物館（東京都|渋谷区）」
1100~@s~@d
1130~@s~@d
1200~🈢🈓BSイレブン|競馬中継 第1部~【中山】5R～8R|【阪神】5R～8|R、9R「ポインセ|チアステークス」
1430~@s~@d|グ
1500~@s
1530~@s~@d|グ
1600~🈢🈓BSイレブン|競馬中継 第2部~【中京】12R 【阪|神】12R 【中山】|12R
1730~@s~@d
1800~🈢ショップチャ|ンネル プラチナ
1830~しまじろうのわ|お！ ＃704「に|こにこ クリスマ|ス」
1900~BS11ガンダムア|ワー ガンダムビ
1930~BS11ガンダムア|ワー 機動戦士ガ|ンダム 鉄血のオ|ルフェンズ 第37
2000~ディスカバリー|傑作選 名車再|生！「2004年式|BMW・M3」~マイクとアントが|再生するのは、20|04年式BMW・M
2100p~偉人・敗北から|の教訓 第119回|「小栗忠順・逆|賊の幕臣が夢見|た日本の未来」|
2155~TrainsJapan
2200~結婚指輪物語Ⅱ|第24話
2230~うまナビ！イレ|ブン
2300~22/7計算外 seas|on2 ＃38~「秋のつ“ふを贈
2330~終末ツーリング|🈡第12話「ビー
2400~グノーシア 第11|話
2430~東島丹三郎は仮|面ライダーにな|りたい ＃12「ま|とめてかかって
2500~夜のクラゲは泳|げない🈡第12話|「JELEE」~クリスマスの夜空
2530~ばっどがーる🈡|＃12
2600~🈢ショップチャ|ンネル レンジで|簡単に焼き目|が！水洗いも|可！ レンジマス|ターエクセ
2700~歌で聴く絵本|「ようかいむ
2730~Healing Music h|our「心地よい
2800~@s~@d
2830~@s`],
["12 BS12ト..",`
0500~山本リンダのど|うにも！☆モー
0530~おはよう！ナニ|ワミュージック|♪ #21~関西在住歌手の歌
0600~BS12ガイド~12月のおすすめ番|組をご紹介！
0630~賢者の選択 Succ|ession~日本の社会課題で|ある事業承継問題
0700~QVC 吸水バツグ|ン！マイクロフ|ァイバータオル~@a極細繊維マイ|クロファイバーの
0800~@q~@a鍋が沸騰した
0900~QVC 保阪尚希こ|だわり「極サプ|リメント」~@a俳優・保阪尚|希さんのこだわり|が詰まった、サプ
1000~QVC 吸水バツグ|ン！マイクロフ|ァイバータオル~@a極細繊維マイ|クロファイバーの|タオル。吸水性と|速乾性に優れなが
1100~@q~@a鍋が沸騰した|ら火からおろし、|あとは保温容器
1200~QVC IKKO 美容|革命 サイムダン|プレミアム~@a美のカリスマ|IKKOさんと伝統
1300~韓国ドラマ 工作|都市～欲望のワ|ルツ～【スエ主|演】第19話、第2|0話（字幕）~BS初放送！スエ|×キム・ガンウ！|演技派俳優による|愛憎劇！トップを|目指す人々の深い|欲望を描くミステ|リー心理スリラー|ドラマ。（全30|話）
1500~@t
1530~サスペンス傑作|選「指名手配3」~逃亡犯の母を待つ|息子。だが新たな|疑惑が… 今井|（渡辺）は警視庁|共助課の刑事。|夫・宣介（蛭子）|の会社の金を奪っ|て逃亡中の直美|（藤）が、清水市|内にいるとの情報|が！
1719~@t
1748~久住昌之のニッ
1800~ダイドーグルー|プ日本の祭り ＃|664 花祭（201|2）【愛知】~ダイドーグループ
1855~BS12ガイド
1900~土曜洋画劇場|「サブウェイ123|激突」（字幕）~デンゼル・ワシン|トン主演、NY地|下鉄で発生した地|下鉄事件解決に挑|むパニック・サス|ペンス。
2100p~土曜しょ～と劇|場 「オーラ、イ|
2125~久住昌之のニッ|ポン箸休めさん
2155~BS12ガイド
2200~@q~@a鍋が沸騰した
2300~QVC 保阪尚希こ|だわり「極サプ|リメント」~@a俳優・保阪尚|希さんのこだわり
2400~QVC ベストセラ|ー 肌にエネルギ|ー エレクトーレ~ミネラルオーレ|（鉱泥）を配合し|たフェイスソープ|やトリートメント
2500~QVC 香りの花束|をFC エレガン|テ by ピカ子~メイクアップアー|ティストのピカ子|さんがプロデュー|ス。女性が輝ける
2600~韓国ドラマ ミッ|シング2～彼らが|いた～ 第2話|（字幕）~コ・ス×ホ・ジュ|ノのブロマンスに|も注目！スケール
2700~ウェザーニュー|スLiVE~最新の気象情報を|お届けします。
2800~知里と修右のミ|ュージックエッ|センス ＃18
2830~あなたに届ける|音楽会 ＃155`],
["放送大学テレビ",`
0600~🈑フランス語Ⅰ|第12回~「禁止する」
0645~🈑レジリエンス|の科学 第12回~「地球環境・生態|系：生物・生態系|のレジリエンス」
0730~🈑初歩からの数|学 第12回~「数列」
0815~🈑エネルギーと|社会 第12回~「原子力エネルギ|ーと核融合」
0900~@k
0915~@k
0930~@k
0945~🈑「人新世」時|代の文化人類学|第12回~「自然と身体の人|類学」
1030~🈑量子化学 第12|回~「光と分子の相互|作用」
1115~🈑正多面体と素|数 第12回~「可換環上の線形|代数」
1200~@k
1215~@k
1230~@k
1245~🈑疾病の回復を|促進する薬 第12|回~「抗がん薬」
1330~🈑肢体不自由児|の教育 第12回~「重複障害児の理|解」
1415~🈑現代経済学 第|12回~「市場を設計する|経済学 スミス／|ヴィックレー／ロ|ス」
1500~🈑日本語学入門|第12回~「敬語ー”遠い言|葉”敬語の働き
1545~🈑自然科学はじ|めの一歩 第12回~「数学（1）数学|の言葉と論理」
1630~🈑初歩からの化|学 第12回~「酸塩基」
1715~🈑持続可能な社|会と生活 第12回~「持続可能な地域|づくりのためのグ
1800~🈑金融と社会 第|12回~「デフレと非伝統|的金融政策」
1845~🈑雇用社会と法|第12回~「就業形態の多様|化と労働市場」
1930~🈑スペシャル講|演「これからの|日本農業を考え|る–農業経営研
2015~アーカイブス 初|歩のイタリア語|('17)「⑫おいし|いイタリア3」~「⑫おいしいイタ|リア3：ハムとミ|ルクと国風の間
2100~キャンパスガイ
2115~ファカルティ・
2130~学習センター紹
2145~🈑BSキャンパス|ex特集「自分の|学習を設計す|る」
2230~16番目の授業|「法学入門 日本|における法学の|誕生」
2315~🈑小児看護学 第|12回~「災害に巻き込ま
2400~🈑母性看護学 第|12回~「わが国の地域母|子保健行政と諸外
2445~精神看護学 第12|回~「精神科リハビリ|テーション」
2530~続・日本の近代|化を知る「第12|章 産業の発展と|産業政策」
2615~続・日本の近代|化を知る「第13|章 財政と金融の|発展」
2700~放送大学クラシ|ックス「わたし|の学問研究 ヨー|ロッパにおける
2745-`],
["放送大学テレビ",`
1200~🈑フランス語Ⅰ|第12回~「禁止する」
1245~🈑エネルギーと|社会 第12回~「原子力エネルギ|ーと核融合」
1330~🈑初歩からの数|学 第12回~「数列」
1415~🈑レジリエンス|の科学 第12回~「地球環境・生態|系：生物・生態系|のレジリエンス」
1500~🈑小児看護学 第|12回~「災害に巻き込ま|れる子どもと家族
1545~🈑母性看護学 第|12回~「わが国の地域母|子保健行政と諸外|国の周産期医療シ|ステム」
1630~精神看護学 第12|回~「精神科リハビリ|テーション」
1715-`],
["グリーンチャンネル",`
0430~参考レース＆重|賞調教VTR（土|曜開催分） #883~「ターコイズS、|タンザナイトS|他」
0630~トレセンまるご|と情報局 #543~東西トレセンから|の取れたて情報を|お届け！
0730~🈞トラックマン|TV #729~「朝日杯フューチ|ュリティS、ター|コイズS、タンザ|ナイトS他 展望」
0900~🈚🈢中央競馬全|レース中継🈓~中央競馬全レース|生中継！JRAで行|われる全レースを|中心にお届けしま|す。
1300~🈢中央競馬全レ|ース中継🈓~中央競馬全レース|生中継！JRAで行|われる全レースを|中心にお届けしま|す。
1700~🈢VANで勝ち馬|さがしてみませ
1730~アタック！地方|競馬 #351~「地方競馬情報が
1800~@m
1930~🈢@u
2100~参考レース＆重|賞調教VTR（日|曜開催分） #883~「朝日杯フューチ|ュリティS（G1）|他」
2300~🈞VANで勝ち馬|さがしてみませ|んか #382
2330~🈞@u
2500~アタック！地方|競馬 #351~「地方競馬情報が|満載！」
2530~@m
2700~🈞VANで勝ち馬|さがしてみませ
2730~🈞@u`],
["BSアニマックス",`
0430~逆境無頼カイジ|破戒録篇 #15,16~#15「虚仮の一|心」#16「決戦の|幕開け」 帝愛グ|ループの裏カジノ
0530~情報~この時間は情報番|組をお送りしてお|ります。
0600~🈑ぼのぼの 傑作|選~#480「はけがきっ
0630~🈑ちびまる子ち|ゃん(第1期)<HD|> ベストセレク|ション
0700~🈑キャプテン・|アース #9,10~#9「魔法少女アカ|リちゃん」 #10|「風の星で」 種|子島を訪れた17歳
0800~TVアニメ キン|肉マン 完璧超人|始祖編Season2|#20,21~#20「師の教えを
0900~🈑ルパン三世(P|ART2) ベストセ|レクション~#25「必殺鉄トカ|ゲ見参」 #26「バ|ラとピストル」|ルパン一味が日本
1000~🈑名探偵コナン|#978~#978「張り込みス
1030~情報~この時間は情報番|組をお送りしてお|ります。
1100~🈑頭文字D Four|th Stage 一挙放|送(1) #1-12~#1～12 究極のド|ライビングテク|で、群馬エリアで|敵なしとなった藤|原拓海は、高校卒|業を機に県外遠征|用チーム“プロ|ジ…
1700~情報~この時間は情報番
1730~🈑ルパン三世(P|ART2) ベストセ|レクション
1800~🈑こちら葛飾区|亀有公園前派出|所 傑作選~#149「カルシウム|で耐えろ」 #150|「肉体派マジシャ|ン」 葛飾区の亀
1900~🈑ヴィジランテ|#7
1930~🈑僕のヒーロー|アカデミア #166~#166 デクをはじ|めとするヒーロー
2000~🈑名探偵コナン|川床に流れた友
2030~チェンソーマン|#7~#7「キスの味」|『チェンソーの悪
2100~🈑SPY×FAMIL|Y（スパイファ|ミリー） #45
2130~SANDA #7~#7 中学生の三田|一重は、雪の降る|12月25日 とある
2200~🈑ルパン三世(P|ART2) ベストセ|レクション~#25「必殺鉄トカ|ゲ見参」 #26「バ
2300~暗殺者である俺|のステータスが|勇者よりも #9
2330~ウタヒメドリー|ム AUDITION #
2400~LAZARUS ラザ|ロ 全13話一挙放|送~#1～13 END 西暦|2052年。世界はか|つてない平和な時|代を迎え、脳神経|学博士スキナーの|開発した鎮痛剤|「ハプナ」が大|き…`],
["J SPORTS 1",`
0400~スーパーカレッ|ジバレー2025 男|子 決勝 早稲田|大学×国士舘大|学~全国から優勝を目|指す大学が一堂に|集結！2025年の大|学バレー日本一が|決まる！
0600~@e
0630~@p|ンズ25/26 #1~どこよりも早くて
0700~バドミントン S/|Jリーグ2025 金|沢大会 岐阜Bluv|ic×ACT SAIKY|O~バドミントンS/J|リーグ 10年目の|シーズンが、開|幕！2月の最終戦T|OP4トーナメント|まで、全国各地で|リーグ戦を戦い団|体日本一を目指し|ます！
1030~インフォメーシ|ョン~暮らしに役立つ情|報番組
1100~第77回全日本大|学バスケットボ|ール選手権 男子|決勝 早稲田大学|×白鷗大学~バスケットボール|大学日本一を決め|る戦い。今年の大|学日本一は果たし|て！？ 早稲田大|学(関東1位)×白鷗|大学(関東3位)
1300~[無料]エクスト|リームH 2025|【ハイライト】|サウジアラビア~持続可能な未来を|実現する技術の実
1400~スーパーフォー
1410~スーパーフォー
1420~[生]ジャパンラ|グビー リーグワ|ン2025-26 D1 第|2節 S東京ベイ×|BR東京~@gクボ|タスピアーズ船|橋・東京ベイ×ブ|ラックラムズ東京
1700~[初]野球好き 20|25シーズンレビ
1730~@i|ラグビーはじま
1800~[無料]ラグビー|わんだほー！|【特別編 リーグ|ワンのミカタ】~おなじみ浅野杏奈|さん、村上晃一さ|ん、谷口廣明さん
1900~[無料]【白銀の
1915~フリースタイル|スキー FIS W杯|25/26【男女M|O】ルカ(12/8)~こぶの急斜面を滑|降し、ターンやエ|アの美しさ、スピ|ードを競う日本で|も人気の高い競技|モーグル。
2115~@p|ンズ25/26 #2
2145~SUPER GT 2025|【ダイジェス
2200~ラグビー全国大|学選手権25/26|準々決勝-1 京都|産業大学×東海|大学~@v
2400~ラグビー全国大|学選手権25/26|準々決勝-2 天理|大学×早稲田大|学~@v
2600~プロバスケ Bリ|ーグ 2025-26 第1|5節-1 群馬×広|島(12/20)~@o
2830ng~スーパーカレッ|ジバレー2025 女|子 決勝 東京女`],
["J SPORTS 2",`
0500~アルペンスキー|FIS W杯25/26|【男子大回転】|ヴァル・ディゼ|ール(12/13)~10月に開幕し翌年|3月までの約6か月|間、世界を転戦す|るFISワールドカ|ップ。 新シーズ|ンは26年2月冬季|五輪に向けて重要|な戦いが待つ！
0800~スキージャンプ|FIS W杯25/26|クリンゲンター|ル(12/13)【男子|LH】~小林陵侑4シーズ|ンぶりの総合優勝|に向けて好発進な|るか！？
1000~インフォメーシ|ョン~暮らしに役立つ情
1030~@e|ターカップ1回戦|丸っとナビ
1100~[初]スノーボー|ド FIS W杯25/2|6【男女HP】カ|ッパーマウンテ|ン(12/19)~10月に開幕し翌年|3月までの約6か月|間、世界を転戦す|るFISワールドカ|ップ。世界トップ|レベルの実力をも|つSNOW JAPAN|が魅せる華麗なト|リックに注目！
1400~[無料]【白銀の
1415~[生]ジャパンラ|グビー リーグワ|ン2025-26 D1 第|2節 東京SG×ト|ヨタV~@g東京|サンゴリアス×ト|ヨタヴェルブリッ|ツ
1700~@i
1730~[初]ガンバレ日|本プロ野球!?リ|ターンズ25/26 #
1800~[初]中日ドラゴ|ンズ ファンフェ|スタ2025~ドラゴンズファン|へ1年間の感謝を|込めて行われる中|日ドラゴンズファ
1900~ジャパンラグビ|ー リーグワン20|25-26 D2 第2節|花園L×GR東葛~@g花園|近鉄ライナーズ×|グリーンロケッツ|東葛
2130~[初]ジャパンラ|グビー リーグワ|ン2025-26 D2 第|2節 九州KV×江|東BS~日本代表選手や海|外スター選手が参|戦し繰り広げる世|界トップクラスの|プレーに注目！|九州電力キューデ|ンヴォルテクス×|清水建設江東ブル|ーシャークス
2400~ジャパンラグビ|ー リーグワン20|25-26 D1 第2節|S東京ベイ×BR|東京~@gクボ|タスピアーズ船|橋・東京ベイ×ブ|ラックラムズ東京
2630~第105回全国高校|ラグビー 長崎県
2700~ダーツ The Perf|ect 9 Part2 【神|業、歴史に刻ま|れるナインダー|ツ】
2800ng~アルペンスキー|FIS W杯25/26|【男子回転】ヴ|ァル・ディゼー|ル(12/14)~10月に開幕し翌年`],
["J SPORTS 3",`
0330~FIAフォーミュ|ラE世界選手権2|025/26 第1戦|【決勝】サンパ|ウロ~最先端の技術と世|界のトップドライ|バーたちが融合す|る新時代のモータ|ースポーツ、FIA|フォーミュラE世|界選手権。
0530~ドキュメンタリ|ーThe REAL 小|笠原慎之介 勇気|と決断のMLB挑|戦記~幼い頃からの夢を|叶え、今季メジャ
0630~[無料]エクスト|リームE 2025|【ハイライト】|第1・2戦 サウジ
0700~スーパーフォー|ミュラ2025 第8|戦【決勝】スポ|ーツランドSUG|O~シーズンも半分を|過ぎ後半戦へと差|し掛かる第8戦。|第7戦終了時点で|ドライバーズラン|キングトップの坪|井翔をダンディラ|イアンの太田格之|進、牧野任祐が追
0920~インフォメーシ|ョン
0950~@i|ラグビーはじま
1020~[無料]ラグビー|わんだほー！～|ラグビー情報番|組～ #113~最新情報の「ニュ|ースジャッカル」|や、好プレー珍プ|レーなどラグビー|情報満載！
1120~[生]ラグビー全|国大学選手権2|5/26 準々決勝-1|京都産業大学×|東海大学~@v
1350~[生]ラグビー全|国大学選手権2|5/26 準々決勝-2|天理大学×早稲|田大学~@v
1630~@i|ラグビーはじま|るよ『花園2025
1700~WRC世界ラリー|選手権2025 第14|戦 サウジアラビ|ア【レビュー】~WRC初開催とな|ったサウジアラビ
1800~[無料]エクスト|リームH 2025|【ハイライト】|サウジアラビア~持続可能な未来を|実現する技術の実|証・普及と環境意
1900~ラグビー全国大|学選手権25/26|準々決勝-1 京都|産業大学×東海|大学~@v
2100~[初]プロバスケ|Bリーグ 2025-26|第15節-1 群馬×|広島(12/20)~@o
2330~ジャパンラグビ|ー リーグワン20|25-26 D1 第2節|東京SG×トヨタ|V~@g東京|サンゴリアス×ト|ヨタヴェルブリッ|ツ
2600~バドミントン S/|Jリーグ2025 鳥|取大会 再春館製|薬所×北都銀行~バドミントンS/J|リーグ 10年目の|シーズンが、開|幕！2月の最終戦T|OP4トーナメント|まで、全国各地で|リーグ戦を戦い団|体日本一を目指し|ます！
2830~@p`],
["J SPORTS 4",`
0500~ラグビー全国大|学選手権25/26 3|回戦-2 早稲田大|学×関東学院大|学~@v
0700~ラグビー全国大|学選手権25/26 3|回戦-3 関西学院|大学×福岡工業|大学~@v
0900~ラグビー全国大|学選手権25/26 3|回戦-4 京都産業|大学×慶應義塾|大学~@v
1100~フリースタイル|スキー FIS W杯|25/26【男女M|O】ルカ(12/8)~こぶの急斜面を滑|降し、ターンやエ|アの美しさ、スピ|ードを競う日本で|も人気の高い競技|モーグル。
1300~サッカーニュー|ス Foot!超高校|サッカー通信(1|2/18)
1345~@e|ターカップ1回戦|丸っとナビ
1420~[生]ジャパンラ|グビー リーグワ|ン2025-26 D2 第|2節 花園L×GR|東葛~@g花園|近鉄ライナーズ×|グリーンロケッツ|東葛
1700~[無料]【白銀の
1715~【第4戦】UCIシ|クロクロス ワー|ルドカップ 202|5/26 ナミュール|Cycle*~距離ではなく時間|で争うシクロクロ|ス。障害物があ|り、下車して自転|車を担がなければ|いけないシーンが|見どころのひと|つ！ 実況：小俣
1900~Cycle*2025 #jsp|ocycle大忘年会~#jspocycle大忘年|会を今年もお届|け！ 見どころが|盛りだくさんだっ|た今シーズンを皆|さんと一緒に生放|送で振り返りま|す！
2200~@p
2230~@p
2300~[生]【第5戦】U|CIシクロクロス|ワールドカップ|2025/26 アント|ワープ Cycle*~距離ではなく時間|で争うシクロクロ|ス。障害物があ|り、下車して自転|車を担がなければ|いけないシーンが|見どころのひと|つ！ 実況：小俣|雄風太
2500~[無料]フリース|タイルスキー FI|S W杯25/26【男|女SX】ヴァル・|トランス(12/11)~多くの障害がある|ため、接触、転倒|等も頻繁に起こ|り、選手間の駆け|引きも見所で「雪|上のモトクロス」|ともいわれてい|る。
2700~[無料]ドキュメ|ンタリーThe RE|AL 女子バスケ|SMBC TOKYO|SOLUA 新たな
2800~@e
2830~スキージャンプ|FIS W杯25/26`],
["BS釣りビジョン",`
0500~Dz SALT 2ND 4|1 東京湾＆西湘|アジング~今回の『DzSALT|2ND』は東京湾と|相模湾でのアジン|グ2本立て。東京
0600~海と青の物語 13|瀬戸内 冬のライ|トゲーム~誰もが楽しめるシ|ョアソルトゲーム|をテーマとした|『海と青の物
0700~IGNITION 7 長崎|県宮ノ浦 グレ釣|り道場~九州を中心に、磯|釣りファンから絶|大な支持を得る猪
0800~🈟Go for it！ 20|5 11月の長良川~孤高のバスフィッ|シャーマン、田辺|哲男が唯一無二の
0900~ブレイクタイム~季節に合わせた
0930~押忍！東北つれ|つれ団 13 ブリ|ジギング~東北3県の「海に
1000~ヘラブナギャラ|リー 納得のいく|一枚／長野県 中|綱湖~四季折々、名手が|ヘラブナ釣りの技|と魅力を伝える|『ヘラブナギャラ
1100~Oh！エド釣り日|記 何がでるか|な？Oh！エド玉|手箱~身近な堤防や海釣|り施設から沖磯ま|で、ロケの日程で
1200~ブレイクタイム~季節に合わせた
1230~お魚ざくざく北|信越！ 21 富山|湾タチウオ
1300~アジングへ行こ|う！ 53 愛媛県|佐田岬半島を攻|略~今回の『アジング|へ行こう！』は、
1400~SOUL JERKER|27 静岡伊豆×夏|エギング~テーマはプラスワ|ンエギング。これ|まで釣れなかった|アオリイカを釣る|ためには、どんな
1500~ブレイクタイム~季節に合わせた
1530~バーニング帝国|68~皆さんは覚えてい|るだろうか。昨年
1600~Rock'n Fish 108|和歌山ロックゲ|ーム~ロックフィッシュ|ゲームの奥深さと|楽しさを追求する|『Rock’n Fis
1700~オフショアレボ|リューションNE|XT 172 泳がせ~沖釣り界の新たな|発見、そして革命|を目指す「オフシ
1800~D-IMPACT 89|フル満水の池原|ダムに挑む~奥村和正が独自の|スタイルで、デカ|バスだけを追い求|めるシリアスドキ
1900~ソルトギャラリ|ー 43 東京湾シ|ーバス~今回は東京湾のボ|ートシーバスゲー|ムにビッグバスハ|ンターのSatanシ
2000~🈟オトコの釣り|メシ 33 兵庫県|明石海峡の紅葉|鯛~魚の伝道師、ウエ|カツこと上田勝彦|が極上の釣魚料理
2100~🈟ワカサギマニ|アックス 32 尾|崎流数釣りの極|意！~初心者からファミ|リーまで楽しめる|ワカサギ釣り。そ
2200~魚種格闘技戦！|273 極翔！セイ|ルフィッシュ前|篇~全世界をフィール
2300~【厳選！2025年|いい釣り特集】|魚種格闘技戦！|274 セイルフィ|ッシュ後篇
2400~Seabass Journe|y 46 長崎県島原|半島~シーバスフィッシ|ングのスペシャリ|スト・村岡昌憲が|大型のシーバスを
2500~🈚魚とフィール|ドの未来のため|に 1~釣りができる環境
2530~目指せ！竿頭 8|テンヤマダイ
2600~SALT Dreamer|82 長崎県対馬ヒ|ラスズキ~プロアングラー鈴|木斉が世界を舞台|に夢のビッグワン|を追い求める実釣
2700~ITT 14 初冬の南|薩久志 大型グレ|に挑む~木枯らしが吹き始|める12月上旬、鹿
2800~特捜AJIENT 11|北海道道南を調|査せよ！~ルアーメーカーの|工場長、長澤耀。|彼には『特捜AJI`],
["WOWOWプラス",`
0130~連続ドラマW プ|ラージュ ～訳あ|りばかりのシェ|アハウス～ #1～|5（全5話）~星野源主演！社会|から一度は退場さ|せられ、様々な過|去を背負った厄介|者たちが集まるシ|ェアハウスを巡る|再生の物語。共演|は仲里依紗、眞島|秀和、スガシカオ|ほか。（全5話）
0515~🈙天使のくれた|時間~ニコラス・ケイジ|主演のハートウォ|ーミングなファン|タジー。ふたつの|人生を生きること|で本当の幸せを知|る男の物語。監督|は『ラッシュアワ|ー』のブレット・|ラトナー。
0730p~🈙雷桜 ◆岡田将|生、蒼井優 出演~岡田将生＆蒼井優|という人気俳優同|士の共演で、切な|く甘美に描いた恋|愛時代劇。宇江佐|真理による同名小|説をもとに、許さ|れぬ恋に身と心を|焦がしていく若い|男女の姿を描写。
1000~闇金ウシジマく|ん Season3 #1～|9（全9話）【3|週連続！シリー|ズ一挙】~山田孝之主演で映|像化された大人気|シリーズのシーズ|ン3。闇金融の経|営者・丑嶋(ウシ|ジマ)を主人公|に、人間の暗部|と“闇の先にある|光”を描く。（全|9話）
1400p~🈙映画『闇金ウ|シジマくん Part|3』【3週連続！|シリーズ一挙】~真鍋昌平のコミッ|クを、山田孝之主|演で映像化したT|Vドラマの劇場版|シリーズ第3作。|詐欺まがいの情報|商材に踊らされる|若者と、キャバ嬢|に入れ揚げた会社|員を悲劇が待つ。
1630p~🈙映画『闇金ウ|シジマくん ザ・|ファイナル』|【3週連続！シリ|ーズ一挙】~真鍋昌平のコミッ|クを山田孝之主演|で映像化したTV|ドラマの劇場版第|4弾で、シリーズ|完結編。中学時代|の友人と再会した|ことを機に、ウシ|ジマ(丑嶋)の過去|が明かされる。
1900~🈙ラストミッシ|ョン 【最後の大|仕事】~ケヴィン・コスナ|ーが主演したスパ|イサスペンス。余|命宣告を受けたCI|Aエージェント|が、疎遠な仲の元|妻や娘との関係修|復に励みながら最|後の大仕事に挑|む。
2115p~🈙MEMORY メ|モリー~リーアム・ニーソ|ンが、アルツハイ|マーを発症し、余|命宣告を受けた殺|し屋を熱演したク|ライムアクショ|ン。引退を決めて|いた主人公は殺さ|れた少女のため、|巨悪に戦いを挑|む。
2315~🈙ザ・シークレ|ット・サービス|【最後の大仕|事】~クリント・イース|トウッド主演に|『U・ボート』の|ウォルフガング・|ペーターゼン監督|が、大統領暗殺を|目論む殺し屋と老|練な警護官の対決|を描くアクショ|ン・サスペンス。
2530p~🈙私の奴隷にな|りなさい~人気美人タレン|ト、壇蜜の体当た|りの熱演が話題に|なってヒット。彼|女が演じるミステ|リアスな美人OL|は後輩の男性社員|を翻弄する一|方、“ご主人|様”との秘密の
2715p~🈙白い指の戯れ|[R15+指定版]~日活の官能作品群|の初期を代表する|傑作。本作が映画|初主演となった伊
2835p~🈙エロチカ・ポ|リス`],
["日本映画専門ch",`
0500~警視–K（全13|話）#12 【あさ4|時の名優劇場】~出演：勝新太郎／|奥村真粧美／北見|治一 監督：吉原|勲 脚本：高際和
0600~ロケ地探訪 旅め|ぐり #3 京都・
0620~7人の女弁護士|（2006）（全9|話）#1-4 【週末|イッキミドラ|マ】~出演：釈由美子／|原沙知絵／井上和|香／柴田理恵／南|野陽子／川島なお|美 ※放送時間の|詳細は日本映画専|門チャンネルHP|へ 「日本映画」|で検索！
1030~【無料】生活情|報の時間~この時間は、ショ|ッピング情報をお|送りしておりま
1100~新参者（全10|話） #1-5 【年|末年始一斉摘|発！お前達、全|員逮捕だ！特|集】~@f
1530~新参者（全10|話）#6-10🈡|【お前達、全員|逮捕だ！特集】~@f
2000~赤い指 ～「新参|者」加賀恭一郎|再び！【お前|達、全員逮捕|だ！特集】~出演：阿部寛／黒|木メイサ／溝端淳|平 原作：東野圭|吾 刑事・加賀恭|一郎が人形町に赴|任する前の事件を|描く。（2011年 1|23分）
2210~🈙麒麟の翼～劇|場版・新参者～|【お前達、全員|逮捕だ！特集】~出演：阿部寛／新|垣結衣／中井貴一|監督：土井裕泰|脚本：櫻井武晴|東野圭吾原作の大|ヒットドラマ『新|参者』の劇場版。|（2012年 130分）
2435~“新参者”加賀|恭一郎「眠りの|森」【お前達、|全員逮捕だ！特|集】~出演：阿部寛／石|原さとみ／音月桂|原作：東野圭吾|バレエ界の複雑で|切ない人間模様を|描く、傑作ミステ|リードラマ。（20|14年 129分）
2650p~🈙祈りの幕が下|りる時 【年末年|始一斉摘発！お|前達、全員逮捕|だ！特集】~出演：阿部寛／松|嶋菜々子／溝端淳|平 監督：福澤克|雄 脚本：李正美|東野圭吾原作|「新参者」シリー|ズ完結編！（2018`],
["ディズニーch",`
0500~SHIROBAKO#1|9-20~#19「釣れます|か？」、#20「が|んばりマスタン|グ！」5人の夢追|う女の子を中心
0600~ミッキーマウス|クラブハウス#7|7🈔
0630~プーさんといっ|しょ#11🈔~#11「ラビットの|コンサート／ティ
0700~ちいさなプリン|セス ソフィア#7
0730~パップストラク|ション#15🈔~#15「おかえり、
0800~ブルーイ#21🈔~#21「ネンネのじ
0830~ビッグシティ・|グリーン#83🈔
0900~スーパーキティ|#42🈔
0930~ディズニージュ|ニア アリエル#1|5🈔~#15「フェリーン
1000~アリスとふしぎ|のくにのベーカ|リー#38🈔
1030~ジュニア ベイク|オフ シーズン6#|15🈔~#15「決勝」
1130~フィニアスとフ
1145p~パイレーツ・オ|ブ・カリビアン|／最後の海賊🈔~“海の死神”サラ|ザールが解き放た|れた時、海賊全滅|へのカウントダウ|ンが始まった。ジ|ャックVS海の死|神の決戦の行方|は？全ての謎が明|かされる＜最後の|冒険＞が幕を開け|る
1400p~プラダを着た悪|魔🈔~大学卒業後、ジャ|ーナリストを目指|してNYにやって|きたアンディ。ひ|ょんなことから一|流ファッション誌|のカリスマ編集長|ミランダのアシス|タントになったの|だが…。
1600~ミッキーマウス|ミックス・アド|ベンチャー#28
1630~ミッキーマウス|クラブハウス プ|ラス#12🈔~#12「ミニーマウ
1700~キフ#19🈔~#19「教職員ラウ
1730~怪奇ゾーン グラ|ビティフォール|ズ#6🈔
1800~ムーンガール ＆|デビル・ダイナ
1830~フィニアスとフ|ァーブ#82🈔~#82「フィニアス|とファーブの真夏
1900~[初]ミッキーマ|ウスのワンダフ
1930~マーベル・スタ|ジオ 知られざる|秘密#13-#15🈔~#13「ミズ・マー
2000p~シュガー・ラッ|シュ：オンライ|ン🈔~好奇心旺盛な天才|レーサーのヴァネ|ロペと、ゲームの|悪役だけど心優し|いラルフ。大親友|のふたりが、アー|ケードゲームの世|界を飛び出し、イ|ンターネットの世|界を大冒険！
2200p~アルマゲドン🈔~ジェリー・ブラッ|カイマー製作、マ|イケル・ベイ監督|のコンビが放つ、|全世界で大ヒット|を記録した超大|作！人類は、地球|に接近する小惑星|を回避することが|できるのか…？
2435~[新]ラブライ|ブ！スーパース|ター!! 2期#1-3★|チャンネル初放|送！~#1「ようこそLiell|a!へ」ほか。「学|校」で「アイド|ル」☆９人の少女|たちを結ぶ青春学|園ドラマ。スター
2600~クッキングパパ|#17-24~#17「夏だ海だ水|着のプレゼン|ト」、#18「感激|さなえちゃんと盆|踊り」、#19「ア|ツアツ結婚式へ御|招待！」、#20|「ドッキリ！父ち|ゃん危機一髪」ほ|か`],
["J:COM BS",`
0430~福田こうへい・|市川由紀乃・徳|永ゆうきの里山|ライブ~演歌界で絶大な人|気と実力を誇る福|田こうへい|が、“仲良し”演|歌歌手の市川由紀|乃、徳永ゆうきと
0600~@t~@y
0630~マナミ＆光里の|GOLF LOVERS|＃44🈞~女優・ゆうなみの
0700~VS今平周吾 ＃1|7🈞
0730~@t~@y
0800~千客万来～がお|ら寄席～1 桂佐
0830~@t
0900~千客万来～がお|ら寄席～2 桂ち
0930~中国◇蓮花楼 #|8 旅は道連れ|（字幕版）~@h|員・方多病は旅の
1030~@t~@y|ング！毎日選りす|ぐりの商品をご紹
1100~中国◇蓮花楼 #|9 帰らぬ人（字|幕版）~@h|員・方多病は旅の
1200~@t
1230~中国◇蓮花楼 #|10 不吉な花嫁|（字幕版）~@h
1330~@t~@y
1400~中国◇蓮花楼 #|11 池に咲く蓮花|（字幕版）~@h|員・方多病は旅の|中で正体不明の医
1500~@t
1530~中国◇蓮花楼 #|12 恩讐の清算|（字幕版）~@h|員・方多病は旅の|中で正体不明の医
1630~@t~@y|ング！毎日選りす
1700~京都で不動産投|資～知られざる
1730~千客万来～がお|ら寄席～3 桂弥|っこ「子ほめ」
1800~@t
1830~第一容疑者 シー|ズン5 第2話 裁|かれるべき者2|（字幕版）~女性警部ジェー|ン・テニスンは、|男性中心の組織で|周囲と対立しなが|らも難事件を解決|する。苦闘するテ|ニスンの本格的警|察ドラマ。オスカ|ー女優ヘレン・ミ|レン主演。
2030~@t~@y|ング！毎日選りす
2100~千客万来～がお|ら寄席～4 桂佐|ん吉「佐野山」
2130~フランダースの|犬 ＃11 エリー|ナの花畑🈑
2200~フランダースの|犬 ＃12 おじい
2230~フランダースの|犬 ＃13 ナポレ
2300~フランダースの|犬 ＃14 夜空に|描いた絵🈑
2330~フランダースの|犬 ＃15 古い帳
2400~モンド麻雀プロ|リーグ17／18 第|15回女流モンド|杯 ＃13 準決勝|A卓~女流プロ12名によ|る華麗な対局。優|勝者には「王座決|定戦」の出場権！
2600~モンド麻雀プロ|リーグ17／18 第|15回女流モンド|杯 ＃14 準決勝|B卓~女流プロ12名によ|る華麗な対局。優|勝者には「王座決|定戦」の出場権！
2800~泉秀樹の歴史を|歩く ▽鎌倉幕府|と北条時政~作家・泉秀樹が歴|史の現場を探訪取|材し、独自の視点`],
["ＢＳよしもと",`
0500~🈑若手創作落語|の会～よしもと
0530~🈑おはよう歌謡|曲 #88~この時間は厳選し|た歌謡曲をライン
0600~@t~@d
0630~🈢ウェザーニュ|ースLiVE~ライブカメラでの|天候状況、最新の
0700~🈑西川きよしの
0715~🈑桂文枝の全国
0730~@t~@d
0800~🈑にんげんのG|O！風景印220景
0830~ワクワク！やま
0845~オリオンツアー
0900~🈑タカトシ＆ラ|イオンの新ゴル|フやろうぜ！ #2|0~タカトシ＆大西ラ|イオンが芸人仲間|を連れてゴルフ対
1000~お買い物情報~この時間は暮らし|に役立つお買い物
1030~🈑若手創作落語|の会～よしもと|若手噺家による|創作落語バト|ル～ #79
1100~花王名人劇場 さ|よなら円鏡 今日|から円蔵～橘家|円蔵襲名披露~「花王名人劇場」|は昭和の漫才ブー|ムの火付け役にも
1200~営業-1グランプ|リ2025 総決算ス|ペシャル～営業|＆学園祭 出演回|数ランキングTO|P10～~八木の営業マニュ|アル名言連発、新|展開！ ☆業界注|目 吉本興業未来|図 ☆営業芸人の|今年のスケジュー|ルをフル公開 ☆
1400~🈑🈖花月爆笑劇|場 放蕩息子~1974年から1989ま|で放送されていた|「うめだ花月」の|吉本新喜劇をお届|け！ 出演者：池|乃めだか、島田一
1500~🈢ショップチャ|ンネル(12/20)|ラ・メール ビュ|ーティーエラス|チン10~一番星のように輝|く！魚由来の海
1600~🈑西川きよしの
1615~🈑桂文枝の全国
1630~🈑地域発！ど・|ろーかるNEWS|(12月第3週)~地域密着のCATV
1700~🈑ビスケットブ|ラザーズの行け
1730~お買い物情報~この時間は暮らし|に役立つお買い物
1800~🈑全力フルスイ|ングOWVり！！
1830~🈑全力フルスイ|ングOWVり！！|2nd SEASON #2~吉本発アイドルグ
1900~お買い物情報~この時間は暮らし
1930~🈑かまいたちの|掟 #191~究極の心理戦 ポ|ーカーを楽しも
2000~🈑たけだバーベ|キューとキャン
2030~🈑田村淳の夢を|叶えるキャンピ|ングカー #15~キャンピングカー
2100~🈑向井長田のく|るま温泉ちゃん|ねる #63
2130~🈑ガッツ100%テ|レビ～笑いと愛|が企業を救う～
2200~🈡🈑東西南北よ|しもと麻雀リー|グ season5 #25~寄本の麻雀自慢が
2255~🈑ガングリオン
2300~鬼奴＆RGの歌謡|スナック想ひ出|#24
2330~🈑つまみは紅し|ょうが 男子～！
2400~🈑ジモトに乾|杯！居酒屋 礼二
2430~@t~【テレビショッピ|ング】をお送りし
2500~パパ活 #6 「パ|パに抱かれる夜|には」~世間の裏を交に無
2530~さらば、銃よ 警|視庁特別銃装班
2600~@t~【テレビショッピ|ング】をお送りし
2630~🈑ブラマヨ小杉|のサウナをつく|ろう！ #3~サウナ知識ほぼゼ|ロのブラマヨ小杉
2730~@t
2800~🈑全力フルスイ|ングOWVり！！|2nd SEASON #3
2830~@t`]
];

const PLAY = '<svg class="play" viewBox="0 0 21 20"><circle cx="10.5" cy="10" r="6.5" fill="#fff"/><path d="M8.6 7l5 3-5 3z" fill="#e4a55d"/></svg>';

function el(tag, cls, text) {
  const node = document.createElement(tag);
  node.className = cls;
  if (text !== undefined) node.textContent = text;
  return node;
}

function block(from, to, cls) {
  const node = el("div", cls);
  node.style.height = (ticks[to] - ticks[from]) + "px";
  return node;
}

const guide = document.getElementById("guide");

const hourColumn = el("div", "hours");
hourColumn.append(el("div", "name"));
hours.forEach(([time, label, color], i) => {
  const next = hours[i + 1] ? hours[i + 1][0] : "2900";
  const cell = block(time, next, "hour");
  cell.textContent = label;
  cell.style.background = color;
  hourColumn.append(cell);
});
guide.append(hourColumn);

channels.forEach(([name, list], c) => {
  const column = el("div", "channel");
  column.append(el("div", "name c" + (c % 7), name));
  const rows = list.trim().replace(/@([a-z])/g, (_, key) => shared[key]).split("\n").map(row => row.split("~"));
  column.append(block("0130", rows[0][0].slice(0, 4), "blank"));
  rows.forEach(([head, title, desc], i) => {
    const time = head.slice(0, 4);
    const flags = head.slice(4);
    const next = rows[i + 1] ? rows[i + 1][0].slice(0, 4) : "2900";
    if (flags === "-") {
      column.append(block(time, next, "blank"));
      return;
    }
    const item = block(time, next, "item");
    if (flags.includes("n")) item.classList.add("later");
    if (flags.includes("g")) item.classList.add("live");
    const side = el("div", "side");
    side.append(el("div", "min", time.slice(2)));
    const text = el("div", "text");
    text.append(el("div", "title", title.replace(/\|/g, "\n")));
    if (flags.includes("p")) {
      side.insertAdjacentHTML("beforeend", PLAY);
      text.append(el("div", "catchup", "見逃し"));
    }
    if (desc) text.append(el("div", "desc", desc.replace(/\|/g, "\n")));
    item.append(side, text);
    column.append(item);
  });
  guide.append(column);
});
```
